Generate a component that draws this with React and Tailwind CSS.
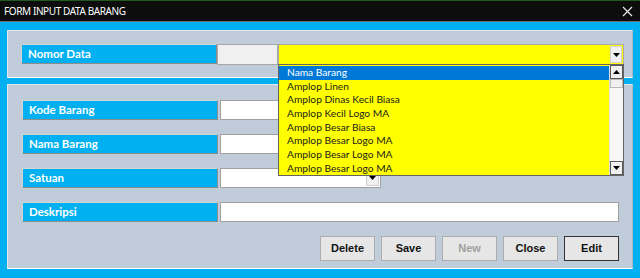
import React from "react";

const items = [
  "Nama Barang",
  "Amplop Linen",
  "Amplop Dinas Kecil Biasa",
  "Amplop Kecil Logo MA",
  "Amplop Besar Biasa",
  "Amplop Besar Logo MA",
  "Amplop Besar Logo MA",
  "Amplop Besar Logo MA",
];

const calibri = { fontFamily: "Lato, 'Noto Sans', sans-serif" };

function Label({ children }) {
  return (
    <div
      className="w-[196px] h-[20px] shrink-0 bg-[#00b0f0] border border-t-[#d4d4d4] border-l-[#d4d4d4] border-b-[#8c8c8c] border-r-[#8c8c8c] text-white font-bold text-[11.5px] leading-[18px] pl-[6px]"
      style={calibri}
    >
      {children}
    </div>
  );
}

function Arrow({ up }) {
  return (
    <svg width="7" height="4" viewBox="0 0 7 4">
      <path d={up ? "M0 4 L3.5 0 L7 4 Z" : "M0 0 L7 0 L3.5 4 Z"} fill="#000" />
    </svg>
  );
}

function Field({ label, children }) {
  return (
    <div className="flex items-stretch gap-[1px]">
      <Label>{label}</Label>
      {children}
    </div>
  );
}

export default function App() {
  return (
    <div className="w-[640px] h-[278px] flex flex-col bg-[#00b0f0] overflow-hidden">
      <div className="h-[22px] shrink-0 bg-[#0d0d0d] border-t border-[#1f5a1f] border-b border-b-[#6b6b6b] flex items-center justify-between pl-[4px] pr-[6px]">
        <span
          className="text-white text-[10px] tracking-[-0.4px]"
          style={{ fontFamily: "'Noto Sans', sans-serif" }}
        >
          FORM INPUT DATA BARANG
        </span>
        <svg width="11" height="11" viewBox="0 0 11 11" className="mr-[1px]">
          <path d="M1 1 L10 10 M10 1 L1 10" stroke="#e6e6e6" strokeWidth="1.2" />
        </svg>
      </div>

      <div className="flex flex-col gap-[6px] pt-[8px] pl-[7px] pr-[7px]">
        {/* top panel */}
        <div className="h-[48px] bg-[#c0ccd9] border border-t-[#e2e8ee] border-l-[#e2e8ee] border-b-white border-r-[#aab6c2] pl-[13px] pt-[13px]">
          <div className="flex h-[21px]">
            <Label>Nomor Data</Label>
            <div className="w-[61px] h-[21px] bg-[#f0f0f0] border border-[#a8a8a8]" />
            <div className="relative w-[346px] h-[21px] bg-[#ffff00] border border-[#a8a8a8] flex justify-end">
              <div className="w-[12px] h-[17px] mt-[1px] mr-[1px] bg-[#f0f0f0] border border-[#d0d0d0] flex items-center justify-center">
                <Arrow />
              </div>
              <div
                className="absolute left-[-1px] top-[19px] w-[346px] h-[112px] bg-[#ffff00] border border-[#646464] z-10 flex text-[10.2px]"
                style={calibri}
              >
                <div className="flex-1 flex flex-col pt-[1px]">
                  {items.map((it, i) => (
                    <div
                      key={i}
                      className={`h-[13.7px] leading-[13.7px] pl-[8px] ${i === 0 ? "bg-[#0078d7] text-white" : "text-[#1a1a1a]"}`}
                    >
                      {it}
                    </div>
                  ))}
                </div>
                <div className="w-[14px] bg-[#f7f7f7] flex flex-col justify-between border-l border-[#e0e0e0]">
                  <div>
                    <div className="h-[14px] bg-[#f0f0f0] border border-[#5a5a5a] flex items-center justify-center">
                      <Arrow up />
                    </div>
                    <div className="h-[9px] bg-[#f0f0f0] border border-[#b8b8b8]" />
                  </div>
                  <div className="h-[14px] bg-[#f0f0f0] border border-[#5a5a5a] flex items-center justify-center">
                    <Arrow />
                  </div>
                </div>
              </div>
            </div>
          </div>
        </div>

        {/* bottom panel */}
        <div className="h-[185px] bg-[#c0ccd9] border border-t-[#e2e8ee] border-l-[#e2e8ee] border-b-white border-r-[#aab6c2] pt-[15px] pl-[14px] pr-[13px] flex flex-col gap-[14px]">
          <Field label="Kode Barang">
            <div className="w-[402px] h-[20px] ml-[1px] bg-white border border-[#a0a0a0]" />
          </Field>
          <Field label="Nama Barang">
            <div className="w-[402px] h-[20px] ml-[1px] bg-white border border-[#a0a0a0]" />
          </Field>
          <Field label="Satuan">
            <div className="w-[161px] h-[20px] ml-[1px] bg-white border border-[#a0a0a0] flex justify-end">
              <div className="w-[13px] h-[16px] mt-[1px] mr-[1px] bg-[#f0f0f0] border border-[#d0d0d0] flex items-center justify-center">
                <Arrow />
              </div>
            </div>
          </Field>
          <Field label="Deskripsi">
            <div className="w-[402px] h-[20px] ml-[1px] bg-white border border-[#a0a0a0]" />
          </Field>
          <div className="flex justify-end gap-[6px]" style={{ fontFamily: "'Liberation Sans', Arial, sans-serif" }}>
            {["Delete", "Save", "New", "Close", "Edit"].map((b) => (
              <div
                key={b}
                className={`w-[55px] h-[25px] flex items-center justify-center text-[11px] font-bold bg-[#e6e6e6] border ${
                  b === "Edit" ? "border-[#333333]" : "border-[#adadad]"
                } ${b === "New" ? "text-[#a0a0a0]" : "text-[#111]"}`}
              >
                {b}
              </div>
            ))}
          </div>
        </div>
      </div>
    </div>
  );
}
